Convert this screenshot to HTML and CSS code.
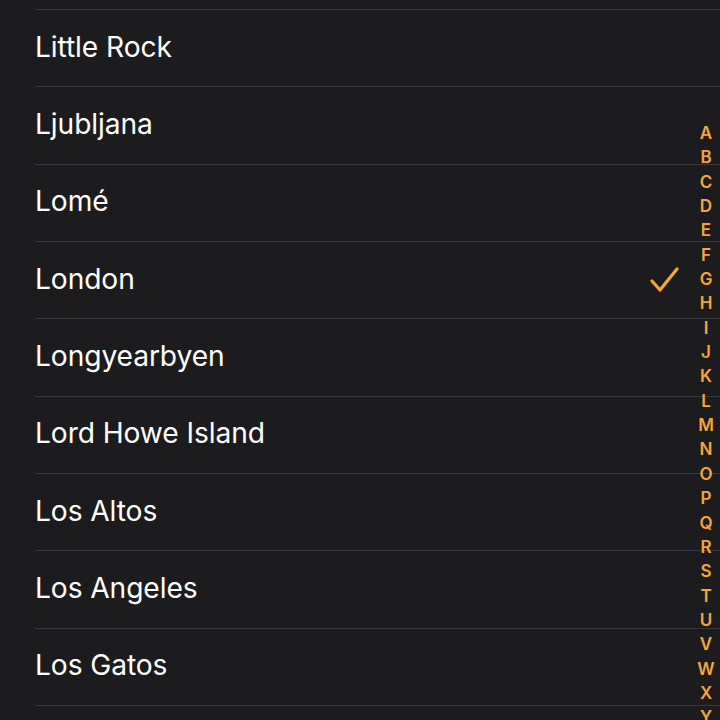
FILE: index.html
```html
<!doctype html>
<html>
 <head>
  <meta charset="UTF-8">
  <title>Cities</title>
  <link rel="stylesheet" href="styles.css">
 </head>
 <body>
  <div class="screen">
	<ul class="cityList">
		<li class="city"></li>
		<li class="city">Little Rock</li>
		<li class="city">Ljubljana</li>
		<li class="city">Lomé</li>
		<li class="city selected">London
			<svg class="check" width="30" height="26" viewBox="0 0 30 26"><path d="M2 14 L10 23 L27 2" fill="none" stroke="#f4a63a" stroke-width="3.2" stroke-linecap="round" stroke-linejoin="round"/></svg>
		</li>
		<li class="city">Longyearbyen</li>
		<li class="city">Lord Howe Island</li>
		<li class="city">Los Altos</li>
		<li class="city">Los Angeles</li>
		<li class="city">Los Gatos</li>
		<li class="city"></li>
	</ul>
	<ul class="index">
		<li>A</li><li>B</li><li>C</li><li>D</li><li>E</li><li>F</li><li>G</li>
		<li>H</li><li>I</li><li>J</li><li>K</li><li>L</li><li>M</li><li>N</li>
		<li>O</li><li>P</li><li>Q</li><li>R</li><li>S</li><li>T</li><li>U</li>
		<li>V</li><li>W</li><li>X</li><li>Y</li><li>Z</li>
	</ul>
  </div>
 </body>
</html>
```
FILE: styles.css
```css
*{
	margin:0;
	padding:0;
}
ul{
	list-style:none;
}
html,body{
	background-color:#1c1c1e;
}
.screen{
	position:relative;
	width:720px;
	height:720px;
	overflow:hidden;
	font-family:"Inter","Noto Sans",sans-serif;
}
.cityList{
	margin-top:-67.3px;
	padding-left:35px;
}
.city{
	display:flex;
	align-items:center;
	justify-content:space-between;
	box-sizing:border-box;
	height:77.33px;
	padding-right:42px;
	padding-bottom:3px;
	border-bottom:1px solid #38383a;
	color:#ffffff;
	font-size:28.2px;
	letter-spacing:-0.1px;
}
.check{
	display:block;
	margin-top:3px;
	margin-right:-2px;
}
.index{
	position:absolute;
	top:121px;
	right:5px;
	width:18px;
	text-align:center;
	color:#f4a63a;
	font-size:17px;
	font-weight:600;
	line-height:24.35px;
}
```
